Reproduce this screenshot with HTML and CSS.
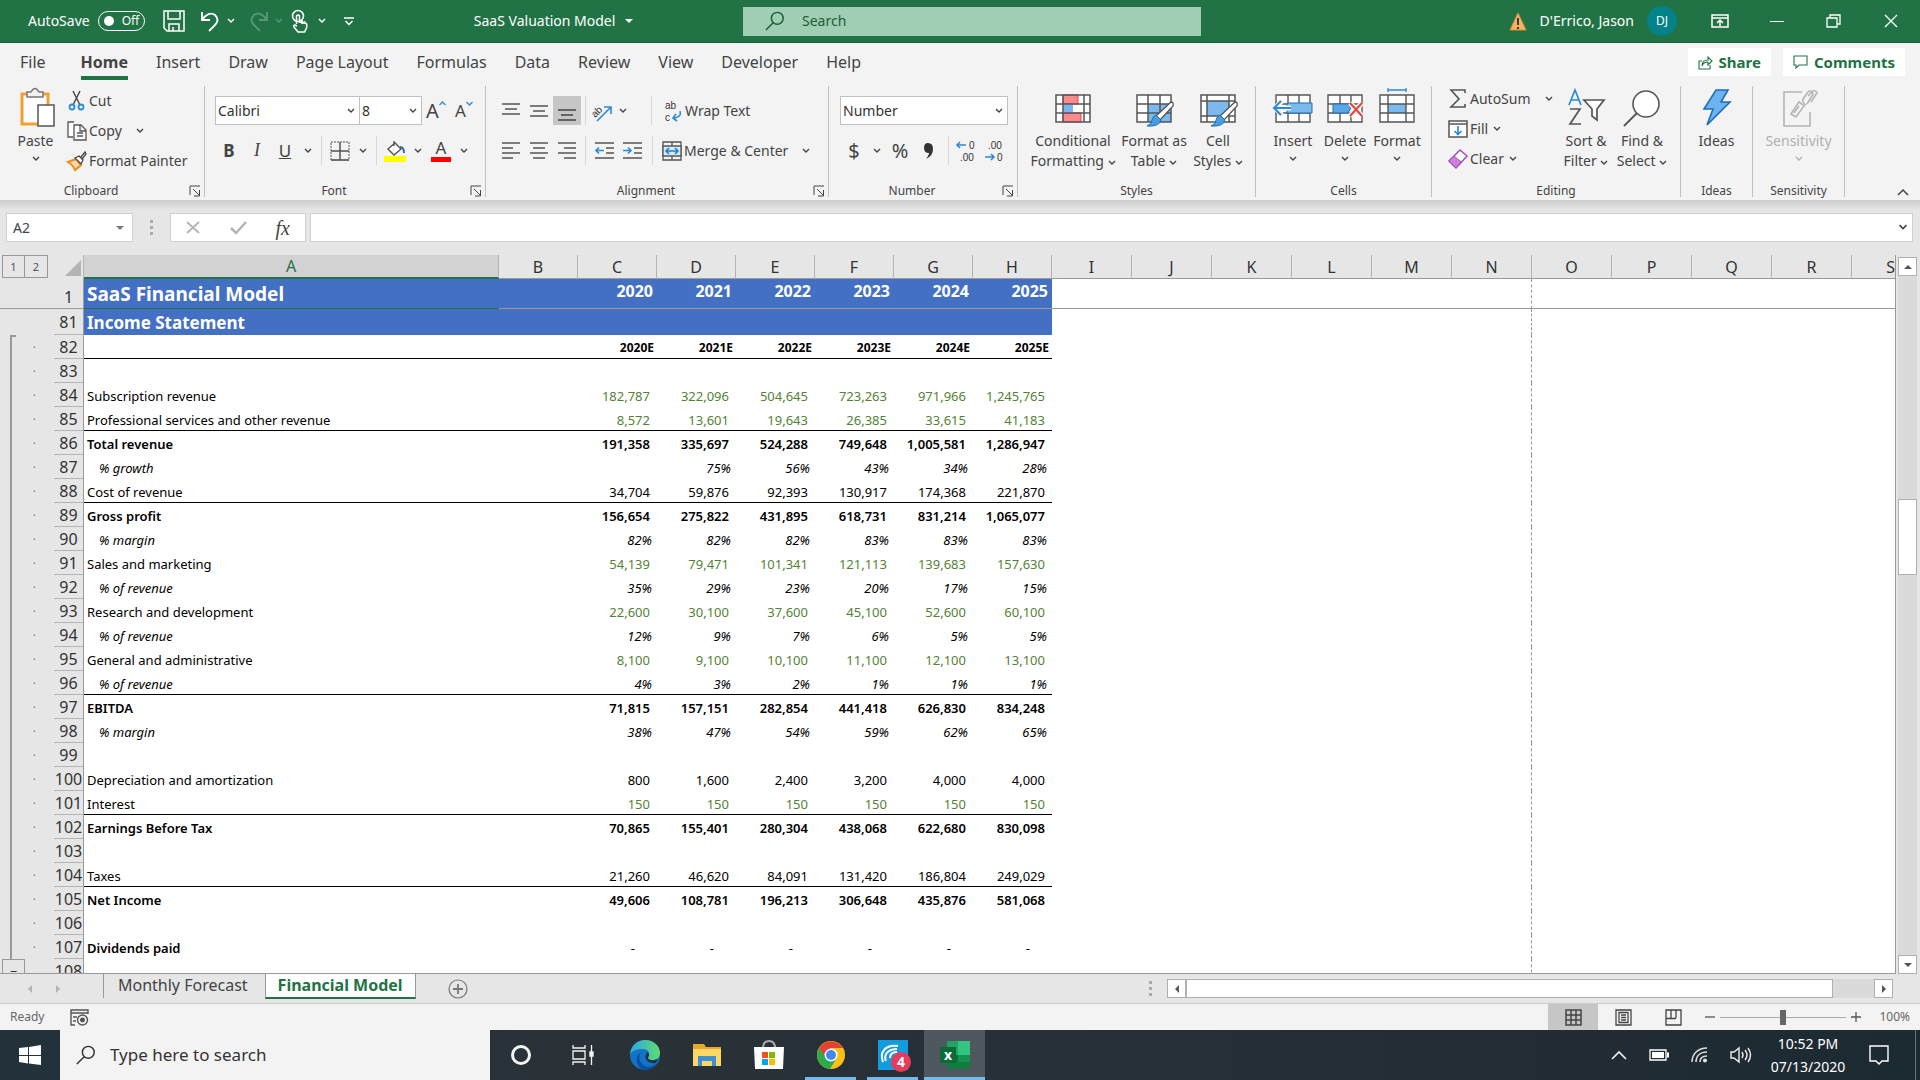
FILE: index.html
```html
<!DOCTYPE html>
<html lang="en">
<head>
<meta charset="utf-8">
<title>SaaS Valuation Model - Excel</title>
<link rel="stylesheet" href="styles.css">
</head>
<body>
<svg class="defs" aria-hidden="true">
  <symbol id="chev" viewBox="0 0 8 6"><path d="M1 1l3 3 3-3" fill="none" stroke="currentColor" stroke-width="1.4"/></symbol>
  <symbol id="launch" viewBox="0 0 12 12"><path d="M1 10V1h10M4 4l6 6M10.500 5v6H5" fill="none" stroke="currentColor"/></symbol>
  <symbol id="glass" viewBox="0 0 22 22"><circle cx="13.500" cy="8" r="6.500" fill="none" stroke="currentColor" stroke-width="1.600"/><path d="M9 13l-8 8" stroke="currentColor" stroke-width="1.600"/></symbol>
</svg>

<header class="titlebar">
  <div class="quick">
    <label class="autosave">AutoSave <input type="checkbox" class="toggle"><span class="toggle-face">Off</span></label>
    <button class="q save" aria-label="Save"><svg width="22" height="22" viewBox="0 0 22 22" fill="none" stroke="currentColor" stroke-width="1.500"><path d="M1 1h20v20H4l-3-3zM5 1v8h12V1M6 21v-7h10v7M10 17v4"/></svg></button>
    <button class="q undo" aria-label="Undo"><svg width="20" height="22" viewBox="0 0 20 22" fill="none" stroke="currentColor" stroke-width="1.800"><path d="M2 2v8h8M2 10c4-6 9-8 13-5 4 4 3 7 0 10l-6 6"/></svg></button>
    <button class="q" aria-label="Undo list"><svg class="chev"><use href="#chev"/></svg></button>
    <button class="q redo dim" aria-label="Redo"><svg width="20" height="22" viewBox="0 0 20 22" fill="none" stroke="currentColor" stroke-width="1.800"><path d="M18 2v8h-8M18 10C14 4 9 2 5 5c-4 4-3 7 0 10l6 6"/></svg></button>
    <button class="q dim" aria-label="Redo list"><svg class="chev"><use href="#chev"/></svg></button>
    <button class="q touch" aria-label="Touch mode"><svg width="18" height="24" viewBox="0 0 18 24" fill="none" stroke="currentColor" stroke-width="1.500"><circle cx="7" cy="7" r="5.500"/><path d="M5.500 15V7q1.500-2 3 0v6l6 1q2 1 1 5l-2 4H7l-4-5q-1-2 1-2l2 1M11 11v4M13.500 12v3" /></svg></button>
    <button class="q" aria-label="Touch list"><svg class="chev"><use href="#chev"/></svg></button>
    <button class="q custom" aria-label="Customize toolbar"><svg width="10" height="9" viewBox="0 0 10 9" fill="none" stroke="currentColor" stroke-width="1.500"><path d="M0 1h10M1.500 4L5 7.500 8.500 4"/></svg></button>
    <button class="docname">SaaS Valuation Model <span class="tri down"></span></button>
  </div>
  <label class="search"><svg width="20" height="20"><use href="#glass"/></svg><input type="text" placeholder="Search" aria-label="Search"></label>
  <div class="account">
    <svg width="18" height="19" viewBox="0 0 18 19"><path d="M9 1l8 17H1z" fill="#f4b264" stroke="#e08a2c"/><path d="M9 6v7M9 15v2" stroke="#3b3b3b" stroke-width="2"/></svg>
    <span class="user">D'Errico, Jason</span>
    <span class="avatar">DJ</span>
    <button class="win" aria-label="Ribbon display"><svg width="18" height="14" viewBox="0 0 18 14" fill="none" stroke="currentColor" stroke-width="1.500"><path d="M1 1h16v12H1zM1 4h16M9 12V6M6 9l3-3 3 3"/></svg></button>
    <button class="win" aria-label="Minimize"><svg width="14" height="14" viewBox="0 0 14 14"><path d="M0 7.500h14" stroke="currentColor"/></svg></button>
    <button class="win" aria-label="Restore"><svg width="15" height="14" viewBox="0 0 15 14" fill="none" stroke="currentColor" stroke-width="1.300"><path d="M1 4h10v9H1zM4 4V1h10v9h-3"/></svg></button>
    <button class="win" aria-label="Close"><svg width="14" height="14" viewBox="0 0 14 14"><path d="M1 1l12 12M13 1L1 13" stroke="currentColor" stroke-width="1.400"/></svg></button>
  </div>
</header>

<nav class="tabs">
  <a href="#" class="file">File</a><a href="#" class="on">Home</a><a href="#">Insert</a><a href="#">Draw</a><a href="#">Page Layout</a><a href="#">Formulas</a><a href="#">Data</a><a href="#">Review</a><a href="#">View</a><a href="#">Developer</a><a href="#">Help</a>
  <div class="collab">
    <button><svg width="15" height="15" viewBox="0 0 15 15" fill="none" stroke="currentColor" stroke-width="1.100"><path d="M4 6H1v8h11v-4M4 11c0-4 2-6 6-6V2l4 4-4 4V7C7 7 5 8 4 11z"/></svg>Share</button>
    <button><svg width="15" height="14" viewBox="0 0 15 14" fill="none" stroke="currentColor" stroke-width="1.100"><path d="M1 1h13v9H6l-3 3v-3H1z"/></svg>Comments</button>
  </div>
</nav>

<section class="ribbon">
  <div class="group clipboard">
    <div class="body">
      <button class="big paste"><svg width="36" height="40" viewBox="0 0 36 40"><path d="M2 6h26v30H2z" fill="#fff" stroke="#f0a030" stroke-width="3"/><path d="M7 4h4q4-7 8 0h4v5H7z" fill="#f3f3f3" stroke="#777" stroke-width="1.500"/><path d="M18 17h16v21H18z" fill="#fff" stroke="#555" stroke-width="1.500"/></svg><span>Paste</span><svg class="chev"><use href="#chev"/></svg></button>
      <div class="stack">
        <button class="small"><svg width="18" height="20" viewBox="0 0 18 20" fill="none" stroke="#444" stroke-width="1.400"><path d="M5 0l7 14M12 0L5 14"/><g stroke="#2b8bd6" stroke-width="1.800"><circle cx="4" cy="16" r="2.500"/><circle cx="13" cy="16" r="2.500"/></g></svg>Cut</button>
        <button class="small"><svg width="20" height="20" viewBox="0 0 20 20" fill="#fff" stroke="#555" stroke-width="1.300"><path d="M7 1H1v15h5"/><path d="M7 4h7l5 5v10H7zM13 4v6h6M10 12h6M10 15h6"/></svg>Copy<svg class="chev gap"><use href="#chev"/></svg></button>
        <button class="small"><svg width="20" height="20" viewBox="0 0 20 20"><path d="M1 11l8-3 5 6-6 5q-2-5-7-8z" fill="#fbd8ae" stroke="#ed8b1c" stroke-width="2"/><path d="M8 7l4-2 4 4-2 4zM14 6l4-5 1 2-4 5" fill="#fff" stroke="#444" stroke-width="1.300"/></svg>Format Painter</button>
      </div>
    </div>
    <div class="name">Clipboard<button class="launch" aria-label="Clipboard options"><svg width="12" height="12"><use href="#launch"/></svg></button></div>
  </div>

  <div class="group font">
    <div class="body rows">
      <div class="row">
        <label class="combo family"><select aria-label="Font"><option>Calibri</option></select><svg class="chev"><use href="#chev"/></svg></label>
        <label class="combo size"><select aria-label="Font size"><option>8</option></select><svg class="chev"><use href="#chev"/></svg></label>
        <button class="ic grow" aria-label="Increase font size"><span class="glyph">A</span><svg width="7" height="5" viewBox="0 0 7 5"><path d="M0.500 4l3-3 3 3" fill="none" stroke="#2b8bd6" stroke-width="1.300"/></svg></button>
        <button class="ic shrink" aria-label="Decrease font size"><span class="glyph">A</span><svg width="7" height="5" viewBox="0 0 7 5"><path d="M0.500 1l3 3 3-3" fill="none" stroke="#2b8bd6" stroke-width="1.300"/></svg></button>
      </div>
      <div class="row">
        <button class="ic w28 fmt"><b>B</b></button><button class="ic w28 fmt ital">I</button><button class="ic w28 fmt"><u>U</u></button><button class="ic w18" aria-label="Underline list"><svg class="chev"><use href="#chev"/></svg></button>
        <span class="sep"></span>
        <button class="ic w28" aria-label="Borders"><svg width="20" height="20" viewBox="0 0 20 20" fill="none" stroke="#555"><path d="M1 1h18v18H1z" stroke-dasharray="2 1"/><path d="M10 1v18M1 10h18M1 19h18" stroke-width="1.500"/></svg></button><button class="ic w18" aria-label="Borders list"><svg class="chev"><use href="#chev"/></svg></button>
        <span class="sep"></span>
        <button class="ic w28" aria-label="Fill color"><svg width="22" height="22" viewBox="0 0 22 22"><path d="M0 16h22v6H0z" fill="#ff0"/><path d="M10 1v5M4 9l7-6 6 6-7 6z" fill="#fff" stroke="#555" stroke-width="1.400"/><path d="M16 7q4 0 4 6" fill="none" stroke="#2b6ea8" stroke-width="2"/></svg></button><button class="ic w18" aria-label="Fill list"><svg class="chev"><use href="#chev"/></svg></button>
        <button class="ic w28" aria-label="Font color"><span class="fontcolor">A</span></button><button class="ic w18" aria-label="Font color list"><svg class="chev"><use href="#chev"/></svg></button>
      </div>
    </div>
    <div class="name">Font<button class="launch" aria-label="Font options"><svg width="12" height="12"><use href="#launch"/></svg></button></div>
  </div>

  <div class="group align">
    <div class="body rows">
      <div class="row">
        <button class="ic w28" aria-label="Top"><svg width="18" height="20" viewBox="0 0 18 20" stroke="#555" stroke-width="1.400"><path d="M0 3h18M3 8h12M0 13h18"/></svg></button><button class="ic w28" aria-label="Middle"><svg width="18" height="20" viewBox="0 0 18 20" stroke="#555" stroke-width="1.400"><path d="M0 5h18M3 10h12M0 15h18"/></svg></button><button class="ic w28 pressed" aria-label="Bottom"><svg width="18" height="20" viewBox="0 0 18 20" stroke="#444" stroke-width="1.400"><path d="M0 9h18M3 14h12M0 19h18"/></svg></button>
        <span class="sep"></span>
        <button class="ic w24" aria-label="Orientation"><svg width="24" height="22" viewBox="0 0 24 22"><text x="1" y="14" transform="rotate(-45 8 11)" class="tinytext">ab</text><path d="M7 21L20 8M14 7h7v7" fill="none" stroke="#2b8bd6" stroke-width="1.600"/></svg></button><button class="ic w18" aria-label="Orientation list"><svg class="chev"><use href="#chev"/></svg></button>
        <span class="sep wide"></span>
        <button class="small wrap"><svg width="20" height="24" viewBox="0 0 20 24"><text x="2" y="10" class="tinytext">ab</text><text x="2" y="22" class="tinytext">c</text><path d="M17 12q2 6-6 7M13 15l-3 4 4 3" fill="none" stroke="#2b8bd6" stroke-width="1.600"/></svg>Wrap Text</button>
      </div>
      <div class="row">
        <button class="ic w28" aria-label="Left"><svg width="18" height="18" viewBox="0 0 18 18" stroke="#555" stroke-width="1.400"><path d="M0 1h18M0 6h11M0 11h18M0 16h11"/></svg></button><button class="ic w28" aria-label="Center"><svg width="18" height="18" viewBox="0 0 18 18" stroke="#555" stroke-width="1.400"><path d="M0 1h18M3 6h12M0 11h18M3 16h12"/></svg></button><button class="ic w28" aria-label="Right"><svg width="18" height="18" viewBox="0 0 18 18" stroke="#555" stroke-width="1.400"><path d="M0 1h18M6 6h12M0 11h18M6 16h12"/></svg></button>
        <span class="sep"></span>
        <button class="ic w28" aria-label="Decrease indent"><svg width="19" height="18" viewBox="0 0 19 18" fill="none" stroke="#555" stroke-width="1.400"><path d="M0 1h19M11 6h8M11 11h8M0 16h19"/><path d="M9 8.500H1M4 5.500l-3 3 3 3" stroke="#2b8bd6" stroke-width="1.700"/></svg></button><button class="ic w28" aria-label="Increase indent"><svg width="19" height="18" viewBox="0 0 19 18" fill="none" stroke="#555" stroke-width="1.400"><path d="M0 1h19M11 6h8M11 11h8M0 16h19"/><path d="M0 8.500h8M5 5.500l3 3-3 3" stroke="#2b8bd6" stroke-width="1.700"/></svg></button>
        <span class="sep near"></span>
        <button class="small merge"><svg width="20" height="20" viewBox="0 0 20 20" fill="none" stroke="#555" stroke-width="1.300"><path d="M1 1h18v18H1zM10 1v4M10 15v4"/><path d="M1 5h18v10H1z" fill="#d6ebfa"/><path d="M4 10h12M7 7l-3 3 3 3M13 7l3 3-3 3" stroke="#1f7fd0" stroke-width="1.600"/></svg>Merge &amp; Center<svg class="chev gap"><use href="#chev"/></svg></button>
      </div>
    </div>
    <div class="name">Alignment<button class="launch" aria-label="Alignment options"><svg width="12" height="12"><use href="#launch"/></svg></button></div>
  </div>

  <div class="group number">
    <div class="body rows">
      <div class="row"><label class="combo numfmt"><select aria-label="Number format"><option>Number</option></select><svg class="chev"><use href="#chev"/></svg></label></div>
      <div class="row">
        <button class="ic w28 sym">$</button><button class="ic w18" aria-label="Currency list"><svg class="chev"><use href="#chev"/></svg></button><button class="ic w28 sym">%</button><button class="ic w28" aria-label="Comma style"><svg width="11" height="18" viewBox="0 0 11 18"><path d="M5 1q5 0 5 6 0 7-7 10 3-4 3-6-5 0-5-5 0-5 4-5z" fill="#333"/></svg></button>
        <span class="sep near"></span>
        <button class="ic w28" aria-label="Increase decimal"><svg width="22" height="24" viewBox="0 0 22 24"><text x="13" y="10" class="tinytext">0</text><text x="4" y="22" class="tinytext">.00</text><path d="M10 6H1M4 3L1 6l3 3" fill="none" stroke="#2b8bd6" stroke-width="1.600"/></svg></button><button class="ic w28" aria-label="Decrease decimal"><svg width="22" height="24" viewBox="0 0 22 24"><text x="4" y="10" class="tinytext">.00</text><text x="13" y="22" class="tinytext">0</text><path d="M1 18h9M7 15l3 3-3 3" fill="none" stroke="#2b8bd6" stroke-width="1.600"/></svg></button>
      </div>
    </div>
    <div class="name">Number<button class="launch" aria-label="Number options"><svg width="12" height="12"><use href="#launch"/></svg></button></div>
  </div>

  <div class="group styles">
    <div class="body">
      <button class="big b96"><svg width="36" height="40" viewBox="0 0 36 40"><path d="M1 7h34v27H1z" fill="#fff"/><path d="M8 7h15v9H8zM8 25h18v9H8z" fill="#ff8a8e" stroke="#e8434a"/><path d="M8 16h10v9H8z" fill="#7cb6ec"/><path d="M1 7h34v27H1zM1 16h34M1 25h34M8 7v27M29 7v27" fill="none" stroke="#555" stroke-width="1.500"/></svg><span>Conditional</span><span>Formatting <svg class="chev"><use href="#chev"/></svg></span></button>
      <button class="big b66"><svg width="40" height="40" viewBox="-2 0 40 40"><path d="M1 7h34v27H1z" fill="#fff"/><path d="M12 16h23v18H12z" fill="#7cb9ee"/><path d="M1 7h34v27H1zM1 16h34M1 25h34M12 7v27M24 7v27" fill="none" stroke="#555" stroke-width="1.500"/><path d="M35 14q3 0 2 4L24 32l-4-4z" fill="#fff" stroke="#555" stroke-width="1.300"/><path d="M20 27l5 5q-2 7-14 6 5-2 5-6 1-4 4-5z" fill="#4a9ee0" stroke="#1d6fb5"/></svg><span>Format as</span><span>Table <svg class="chev"><use href="#chev"/></svg></span></button>
      <button class="big b62"><svg width="40" height="40" viewBox="-2 0 40 40"><path d="M1 7h34v27H1z" fill="#fff"/><path d="M7 13h22v15H7z" fill="#7cb9ee"/><path d="M1 7h34v27H1zM1 13h34M1 28h34M7 7v27M29 7v27" fill="none" stroke="#555" stroke-width="1.500"/><path d="M35 14q3 0 2 4L24 32l-4-4z" fill="#fff" stroke="#555" stroke-width="1.300"/><path d="M20 27l5 5q-2 7-14 6 5-2 5-6 1-4 4-5z" fill="#4a9ee0" stroke="#1d6fb5"/></svg><span>Cell</span><span>Styles <svg class="chev"><use href="#chev"/></svg></span></button>
    </div>
    <div class="name">Styles</div>
  </div>

  <div class="group cells">
    <div class="body">
      <button class="big b52"><svg width="40" height="40" viewBox="0 0 40 40"><path d="M3 7h34v27H3zM3 16h34M3 25h34M15 7v27M26 7v27" fill="#fff" stroke="#555" stroke-width="1.400"/><path d="M14 15h25v10H14z" fill="#7cb9ee" stroke="#1d6fb5"/><path d="M18 20H2M9 13l-7 7 7 7" fill="none" stroke="#f3f3f3" stroke-width="5"/><path d="M18 20H2M8 13l-7 7 7 7" fill="none" stroke="#2b8bd6" stroke-width="2"/></svg><span>Insert</span><svg class="chev"><use href="#chev"/></svg></button>
      <button class="big b52"><svg width="40" height="40" viewBox="0 0 40 40"><path d="M3 7h34v27H3zM3 16h34M3 25h34M15 7v9M26 7v9M15 25v9M26 25v9" fill="#fff" stroke="#555" stroke-width="1.400"/><path d="M8 16h15l3 4-3 5H8z" fill="#5aa7e6" stroke="#1d6fb5"/><path d="M25 15l12 13M37 15L25 28" stroke="#f3f3f3" stroke-width="5"/><path d="M25 15l12 13M37 15L25 28" stroke="#e0483e" stroke-width="2"/></svg><span>Delete</span><svg class="chev"><use href="#chev"/></svg></button>
      <button class="big b52"><svg width="40" height="40" viewBox="0 0 40 40"><path d="M3 7h34v27H3z" fill="#fff"/><path d="M11 16h18v9H11z" fill="#7cb9ee"/><path d="M3 7h34v27H3zM3 16h34M3 25h34M11 7v27M29 7v27" fill="none" stroke="#555" stroke-width="1.400"/><path d="M11 2h18M11 0v4M29 0v4" stroke="#2b8bd6" stroke-width="1.300"/></svg><span>Format</span><svg class="chev"><use href="#chev"/></svg></button>
    </div>
    <div class="name">Cells</div>
  </div>

  <div class="group editing">
    <div class="body">
      <div class="stack">
        <button class="small"><svg width="18" height="20" viewBox="0 0 18 20"><path d="M16 4V1H2l8 9-8 8h14v-3" fill="none" stroke="#555" stroke-width="1.600"/></svg>AutoSum<svg class="chev gap"><use href="#chev"/></svg></button>
        <button class="small"><svg width="20" height="18" viewBox="0 0 20 18" fill="#fff" stroke="#555" stroke-width="1.500"><path d="M1 1h18v16H1zM1 4h18"/><path d="M10 6v8M6.500 11l3.500 3.500 3.500-3.500" fill="none" stroke="#2b8bd6" stroke-width="1.700"/></svg>Fill<svg class="chev near"><use href="#chev"/></svg></button>
        <button class="small"><svg width="20" height="20" viewBox="0 0 20 20"><path d="M12 1l7 6L8 19l-7-7z" fill="#fff" stroke="#a04cb0" stroke-width="1.500"/><path d="M6 7l7 6-5 6-7-7z" fill="#cf7fdc" stroke="#a04cb0"/></svg>Clear<svg class="chev near"><use href="#chev"/></svg></button>
      </div>
      <button class="big b56"><svg width="38" height="40" viewBox="0 0 38 40"><g fill="none" stroke-width="1.700"><path d="M2 17L8 2l6 15M4 12h8" stroke="#2b8bd6"/><path d="M3 21h10L3 36h11" stroke="#555"/><path d="M17 12h20l-7 9v11l-5-4v-7z" stroke="#555" fill="#fff"/></g></svg><span>Sort &amp;</span><span>Filter <svg class="chev"><use href="#chev"/></svg></span></button>
      <button class="big b56"><svg width="38" height="40" viewBox="0 0 38 40"><circle cx="23" cy="16" r="13" fill="#fff" stroke="#555" stroke-width="1.600"/><path d="M14 25L1 38" stroke="#555" stroke-width="1.800"/></svg><span>Find &amp;</span><span>Select <svg class="chev"><use href="#chev"/></svg></span></button>
    </div>
    <div class="name">Editing</div>
  </div>

  <div class="group ideas">
    <div class="body"><button class="big"><svg width="30" height="40" viewBox="0 0 30 40"><path d="M14 2h12l-7 12h9L5 37l6-16H2z" fill="#6db3f0" stroke="#1f6fb8" stroke-width="1.600"/></svg><span>Ideas</span></button></div>
    <div class="name">Ideas</div>
  </div>

  <div class="group sens">
    <div class="body"><button class="big off" disabled><svg width="36" height="40" viewBox="-2 0 36 40" fill="none" stroke="#b4b4b4" stroke-width="1.600"><path d="M19 4H1v34h26V24"/><path d="M8 26l8-12 5 4-8 11zM11 25l5-7"/><path d="M20 11l5-7q2-2 4 0t0 4l-5 8M25 8l5-5q3-1 4 2l-6 9M20 11q-1 4 3 6" /></svg><span>Sensitivity</span><svg class="chev"><use href="#chev"/></svg></button></div>
    <div class="name">Sensitivity</div>
  </div>
  <button class="collapse" aria-label="Collapse ribbon"><svg width="12" height="8" viewBox="0 0 12 8"><path d="M1 7l5-5 5 5" fill="none" stroke="#444" stroke-width="1.500"/></svg></button>
</section>

<section class="formula">
  <label class="namebox"><input type="text" value="A2" aria-label="Name box"><span class="tri down"></span></label>
  <span class="grip"></span>
  <div class="fx">
    <button aria-label="Cancel"><svg width="14" height="13" viewBox="0 0 14 13"><path d="M1 1l12 11M13 1L1 12" stroke="#b4b4b4" stroke-width="1.800"/></svg></button>
    <button aria-label="Enter"><svg width="17" height="13" viewBox="0 0 17 13"><path d="M1 7l5 5L16 1" fill="none" stroke="#b4b4b4" stroke-width="2.500"/></svg></button>
    <button class="f"><i>fx</i></button>
  </div>
  <label class="entry"><input type="text" aria-label="Formula"><svg width="10" height="7"><use href="#chev"/></svg></label>
</section>

<main class="sheet">
  <div class="grid">
    <table>
      <colgroup><col class="c-out"><col class="c-num"><col class="c-a"><col class="c-b"><col class="c-d" span="6"><col class="c-x" span="10"><col></colgroup>
      <thead>
        <tr><td class="levels"><button>1</button><button>2</button></td><td class="corner"><span></span></td><th class="sel">A</th><th>B</th><th>C</th><th>D</th><th>E</th><th>F</th><th>G</th><th>H</th><th>I</th><th>J</th><th>K</th><th>L</th><th>M</th><th>N</th><th>O</th><th>P</th><th>Q</th><th>R</th><th class="last">S</th></tr>
      </thead>
      <tbody>
        <tr class="frozen"><td class="out"></td><th>1</th><td class="title here">SaaS Financial Model</td><td></td><td>2020</td><td>2021</td><td>2022</td><td>2023</td><td>2024</td><td>2025</td><td class="page" colspan="6"></td><td class="blank" colspan="5"></td></tr>
        <tr class="section"><td class="out"></td><th>81</th><td colspan="8">Income Statement</td><td class="page" colspan="6"></td><td class="blank" colspan="5"></td></tr>
        <tr class="years rule"><td class="out first">·</td><th>82</th><td></td><td></td><td>2020E</td><td>2021E</td><td>2022E</td><td>2023E</td><td>2024E</td><td>2025E</td><td class="page" colspan="6"></td><td class="blank" colspan="5"></td></tr>
        <tr><td class="out">·</td><th>83</th><td colspan="8"></td><td class="page" colspan="6"></td><td class="blank" colspan="5"></td></tr>
        <tr class="input"><td class="out">·</td><th>84</th><td>Subscription revenue</td><td></td><td>182,787</td><td>322,096</td><td>504,645</td><td>723,263</td><td>971,966</td><td>1,245,765</td><td class="page" colspan="6"></td><td class="blank" colspan="5"></td></tr>
        <tr class="input rule"><td class="out">·</td><th>85</th><td>Professional services and other revenue</td><td></td><td>8,572</td><td>13,601</td><td>19,643</td><td>26,385</td><td>33,615</td><td>41,183</td><td class="page" colspan="6"></td><td class="blank" colspan="5"></td></tr>
        <tr class="total"><td class="out">·</td><th>86</th><td>Total revenue</td><td></td><td>191,358</td><td>335,697</td><td>524,288</td><td>749,648</td><td>1,005,581</td><td>1,286,947</td><td class="page" colspan="6"></td><td class="blank" colspan="5"></td></tr>
        <tr class="pct"><td class="out">·</td><th>87</th><td>% growth</td><td></td><td></td><td>75%</td><td>56%</td><td>43%</td><td>34%</td><td>28%</td><td class="page" colspan="6"></td><td class="blank" colspan="5"></td></tr>
        <tr class="rule"><td class="out">·</td><th>88</th><td>Cost of revenue</td><td></td><td>34,704</td><td>59,876</td><td>92,393</td><td>130,917</td><td>174,368</td><td>221,870</td><td class="page" colspan="6"></td><td class="blank" colspan="5"></td></tr>
        <tr class="total"><td class="out">·</td><th>89</th><td>Gross profit</td><td></td><td>156,654</td><td>275,822</td><td>431,895</td><td>618,731</td><td>831,214</td><td>1,065,077</td><td class="page" colspan="6"></td><td class="blank" colspan="5"></td></tr>
        <tr class="pct"><td class="out">·</td><th>90</th><td>% margin</td><td></td><td>82%</td><td>82%</td><td>82%</td><td>83%</td><td>83%</td><td>83%</td><td class="page" colspan="6"></td><td class="blank" colspan="5"></td></tr>
        <tr class="input"><td class="out">·</td><th>91</th><td>Sales and marketing</td><td></td><td>54,139</td><td>79,471</td><td>101,341</td><td>121,113</td><td>139,683</td><td>157,630</td><td class="page" colspan="6"></td><td class="blank" colspan="5"></td></tr>
        <tr class="pct"><td class="out">·</td><th>92</th><td>% of revenue</td><td></td><td>35%</td><td>29%</td><td>23%</td><td>20%</td><td>17%</td><td>15%</td><td class="page" colspan="6"></td><td class="blank" colspan="5"></td></tr>
        <tr class="input"><td class="out">·</td><th>93</th><td>Research and development</td><td></td><td>22,600</td><td>30,100</td><td>37,600</td><td>45,100</td><td>52,600</td><td>60,100</td><td class="page" colspan="6"></td><td class="blank" colspan="5"></td></tr>
        <tr class="pct"><td class="out">·</td><th>94</th><td>% of revenue</td><td></td><td>12%</td><td>9%</td><td>7%</td><td>6%</td><td>5%</td><td>5%</td><td class="page" colspan="6"></td><td class="blank" colspan="5"></td></tr>
        <tr class="input"><td class="out">·</td><th>95</th><td>General and administrative</td><td></td><td>8,100</td><td>9,100</td><td>10,100</td><td>11,100</td><td>12,100</td><td>13,100</td><td class="page" colspan="6"></td><td class="blank" colspan="5"></td></tr>
        <tr class="pct rule"><td class="out">·</td><th>96</th><td>% of revenue</td><td></td><td>4%</td><td>3%</td><td>2%</td><td>1%</td><td>1%</td><td>1%</td><td class="page" colspan="6"></td><td class="blank" colspan="5"></td></tr>
        <tr class="total"><td class="out">·</td><th>97</th><td>EBITDA</td><td></td><td>71,815</td><td>157,151</td><td>282,854</td><td>441,418</td><td>626,830</td><td>834,248</td><td class="page" colspan="6"></td><td class="blank" colspan="5"></td></tr>
        <tr class="pct"><td class="out">·</td><th>98</th><td>% margin</td><td></td><td>38%</td><td>47%</td><td>54%</td><td>59%</td><td>62%</td><td>65%</td><td class="page" colspan="6"></td><td class="blank" colspan="5"></td></tr>
        <tr><td class="out">·</td><th>99</th><td colspan="8"></td><td class="page" colspan="6"></td><td class="blank" colspan="5"></td></tr>
        <tr><td class="out">·</td><th>100</th><td>Depreciation and amortization</td><td></td><td>800</td><td>1,600</td><td>2,400</td><td>3,200</td><td>4,000</td><td>4,000</td><td class="page" colspan="6"></td><td class="blank" colspan="5"></td></tr>
        <tr class="input rule"><td class="out">·</td><th>101</th><td>Interest</td><td></td><td>150</td><td>150</td><td>150</td><td>150</td><td>150</td><td>150</td><td class="page" colspan="6"></td><td class="blank" colspan="5"></td></tr>
        <tr class="total"><td class="out">·</td><th>102</th><td>Earnings Before Tax</td><td></td><td>70,865</td><td>155,401</td><td>280,304</td><td>438,068</td><td>622,680</td><td>830,098</td><td class="page" colspan="6"></td><td class="blank" colspan="5"></td></tr>
        <tr><td class="out">·</td><th>103</th><td colspan="8"></td><td class="page" colspan="6"></td><td class="blank" colspan="5"></td></tr>
        <tr class="rule"><td class="out">·</td><th>104</th><td>Taxes</td><td></td><td>21,260</td><td>46,620</td><td>84,091</td><td>131,420</td><td>186,804</td><td>249,029</td><td class="page" colspan="6"></td><td class="blank" colspan="5"></td></tr>
        <tr class="total"><td class="out">·</td><th>105</th><td>Net Income</td><td></td><td>49,606</td><td>108,781</td><td>196,213</td><td>306,648</td><td>435,876</td><td>581,068</td><td class="page" colspan="6"></td><td class="blank" colspan="5"></td></tr>
        <tr><td class="out">·</td><th>106</th><td colspan="8"></td><td class="page" colspan="6"></td><td class="blank" colspan="5"></td></tr>
        <tr class="total dash"><td class="out">·</td><th>107</th><td>Dividends paid</td><td></td><td>-</td><td>-</td><td>-</td><td>-</td><td>-</td><td>-</td><td class="page" colspan="6"></td><td class="blank" colspan="5"></td></tr>
        <tr><td class="out end"><button aria-label="Collapse group">−</button></td><th>108</th><td colspan="8"></td><td class="page" colspan="6"></td><td class="blank" colspan="5"></td></tr>
      </tbody>
    </table>
  </div>
  <div class="vscroll"><button aria-label="Scroll up"><span class="tri up"></span></button><div class="track"><div class="thumb"></div></div><button aria-label="Scroll down"><span class="tri down"></span></button></div>
</main>

<section class="sheettabs">
  <div class="nav"><span class="tri left"></span><span class="tri right"></span></div>
  <a href="#" class="tab">Monthly Forecast</a><a href="#" class="tab active">Financial Model</a>
  <button class="add" aria-label="New sheet"><svg width="20" height="20" viewBox="0 0 20 20" fill="none" stroke="#777" stroke-width="1.200"><circle cx="10" cy="10" r="9"/><path d="M10 5v10M5 10h10" stroke-width="1.800"/></svg></button>
  <span class="grip"></span>
  <div class="hscroll"><button aria-label="Scroll left"><span class="tri left"></span></button><div class="track"><div class="thumb"></div></div><button aria-label="Scroll right"><span class="tri right"></span></button></div>
</section>

<section class="status">
  <span>Ready</span>
  <button aria-label="Record macro"><svg width="19" height="17" viewBox="0 0 19 17" fill="none" stroke="#555" stroke-width="1.400"><path d="M5 16H1V1h17v4M1 4h17M3 8h4M3 12h3"/><circle cx="12.500" cy="11" r="5"/><circle cx="12.500" cy="11" r="1.800" fill="#555"/></svg></button>
  <div class="views">
    <button class="pressed" aria-label="Normal"><svg width="17" height="17" viewBox="0 0 17 17" fill="none" stroke="#444" stroke-width="1.500"><path d="M1 1h15v15H1zM6 1v15M11 1v15M1 6h15M1 11h15"/></svg></button>
    <button aria-label="Page layout"><svg width="17" height="17" viewBox="0 0 17 17" fill="none" stroke="#444" stroke-width="1.300"><path d="M1 1h15v15H1zM4 3.500h9v10H4zM6 6h5M6 8.500h5M6 11h5"/></svg></button>
    <button aria-label="Page break"><svg width="17" height="17" viewBox="0 0 17 17" fill="none" stroke="#444" stroke-width="1.300"><path d="M1 1h15v15H1zM6 1v8M11 1v8M1 9.500h10"/></svg></button>
  </div>
  <button class="zoomout" aria-label="Zoom out"><svg width="10" height="10" viewBox="0 0 10 10"><path d="M0 5h10" stroke="#555" stroke-width="1.300"/></svg></button>
  <input class="slider" type="range" min="0" max="100" value="50" aria-label="Zoom">
  <button class="zoomin" aria-label="Zoom in"><svg width="10" height="10" viewBox="0 0 10 10"><path d="M0 5h10M5 0v10" stroke="#555" stroke-width="1.300"/></svg></button>
  <span class="zoompct">100%</span>
</section>

<footer class="taskbar">
  <button class="start" aria-label="Start"><svg width="22" height="20" viewBox="0 0 22 20" fill="#fff"><path d="M0 3l9-1v8H0zM10 2l12-2v10H10zM0 11h9v7.500L0 17zM10 11h12v9l-12-1.500z"/></svg></button>
  <label class="find"><svg width="22" height="20"><use href="#glass"/></svg><input type="text" placeholder="Type here to search" aria-label="Type here to search"></label>
  <button class="app" aria-label="Cortana"><svg width="22" height="22" viewBox="0 0 22 22"><circle cx="11" cy="11" r="8.500" fill="none" stroke="#f4f4f4" stroke-width="3"/></svg></button>
  <button class="app" aria-label="Task view"><svg width="22" height="20" viewBox="0 0 22 20" fill="none" stroke="#f4f4f4" stroke-width="1.300"><path d="M1 0v3h12V0M1 6h12v8H1zM1 20v-3h12v3M19.500 0v20"/><path d="M18 7h3v4h-3z" fill="#f4f4f4"/></svg></button>
  <button class="app edge" aria-label="Edge"><svg width="30" height="30" viewBox="0 0 30 30"><defs><linearGradient id="eg" x1="0" y1="0" x2="1" y2="0"><stop offset="0" stop-color="#2aa6e8"/><stop offset="1" stop-color="#5fdc6c"/></linearGradient></defs><circle cx="15" cy="15" r="15" fill="#1273c8"/><path d="M0 14C1 5 8 0 15 0c9 0 15 6 15 13 0 5-4 7-8 7-3 0-5-1-4-3 3-4 0-8-5-8-6 0-11 2-13 5z" fill="url(#eg)"/><path d="M13 11c-5 2-5 10 0 14 4 3 10 2 14-2-3 5-8 7-12 7-8-1-13-14-2-19z" fill="#0c4f9c"/><path d="M17 12c3 2 2 4 1 6 1 3 6 3 10 1l-2 4c-8 1-13-4-9-11z" fill="#24303a"/></svg></button>
  <button class="app folder" aria-label="File Explorer"><svg width="28" height="24" viewBox="0 0 28 24"><path d="M0 1h11l2 3h15v19H0z" fill="#e8a92a"/><path d="M0 6h28v17H0z" fill="#ffd767"/><path d="M5 13h18v10h-4v-5H9v5H5z" fill="#3f8fd6"/></svg></button>
  <button class="app" aria-label="Store"><svg width="30" height="30" viewBox="0 0 30 30"><path d="M9 8q0-7 6-7t6 7" fill="none" stroke="#aaa" stroke-width="2"/><path d="M0 7h30l-1 22H1z" fill="#fff"/><path d="M8 12h6v6H8z" fill="#f25022"/><path d="M15 12h6v6h-6z" fill="#7fba00"/><path d="M8 19h6v6H8z" fill="#00a4ef"/><path d="M15 19h6v6h-6z" fill="#ffb900"/></svg></button>
  <button class="app running" aria-label="Chrome"><svg width="28" height="28" viewBox="0 0 28 28"><circle cx="14" cy="14" r="14" fill="#fbc116"/><path d="M2 7a14 14 0 0 1 24 0H14L8 17z" fill="#e34133"/><path d="M2 7a14 14 0 0 0 11 21l6-10-10-1z" fill="#2da94f"/><circle cx="14" cy="14" r="6.500" fill="#fff"/><circle cx="14" cy="14" r="5" fill="#4285f4"/></svg></button>
  <button class="app running" aria-label="Messages, 4 unread"><svg width="30" height="30" viewBox="0 0 30 30"><path d="M0 0h30v30H0z" fill="#139be0"/><path d="M5 22C1 12 8 4 20 6M8 21c-3-7 3-12 11-12M12 18c0-4 3-6 7-6" fill="none" stroke="#fff" stroke-width="2"/></svg><span class="badge">4</span></button>
  <button class="app running excel" aria-label="Excel"><svg width="30" height="28" viewBox="0 0 30 28"><path d="M7 0h23v28H7z" fill="#21a366"/><path d="M18 0h12v14H18z" fill="#33c481"/><path d="M7 14h23v14H7z" fill="#107c41"/><path d="M7 14h11v7H7z" fill="#0e6f3a"/><path d="M18 14h12v7H18z" fill="#169150"/><path d="M0 6h16v16H0z" fill="#0b6b38"/><text x="4" y="19" class="xl">x</text></svg></button>
  <div class="tray">
    <svg width="16" height="10" viewBox="0 0 16 10"><path d="M1 9l7-7 7 7" fill="none" stroke="#eee" stroke-width="1.700"/></svg>
    <svg width="20" height="12" viewBox="0 0 20 12"><path d="M1 1h16v10H1z" fill="none" stroke="#fff" stroke-width="1.300"/><path d="M3 3h12v6H3zM18 3.500h2v5h-2z" fill="#fff"/></svg>
    <svg width="17" height="16" viewBox="0 0 17 16" fill="none" stroke="#ddd" stroke-width="1.500"><path d="M1 15C1 7 7 1 16 1M5 15C5 9 9 5 16 5M9 15c0-4 3-6 7-6"/><circle cx="14" cy="13.500" r="1.300" fill="#fff"/></svg>
    <svg width="22" height="18" viewBox="0 0 22 18" fill="none" stroke="#eee" stroke-width="1.400"><path d="M1 6h3l5-4v14l-5-4H1zM12 6q2 3 0 6M15 4q4 5 0 10M18 2q5 7 0 14"/></svg>
  </div>
  <time class="clock">10:52 PM<br>07/13/2020</time>
  <button class="notes" aria-label="Notifications"><svg width="20" height="20" viewBox="0 0 20 20" fill="none" stroke="#fff" stroke-width="1.400"><path d="M1 1h18v15h-6l-3 3-3-3H1z"/></svg></button>
  <button class="peek" aria-label="Show desktop"></button>
</footer>
</body>
</html>
```
FILE: styles.css
```css
* { box-sizing: border-box; }
body {
  margin: 0;
  height: 100vh;
  display: flex;
  flex-direction: column;
  overflow: hidden;
  background: #e6e6e6;
  color: #444;
  font: 14px/20px "Noto Sans", "Open Sans", sans-serif;
  white-space: nowrap;
}
button, input, select { font: inherit; color: inherit; background: none; border: 0; padding: 0; margin: 0; outline: 0; }
a { color: inherit; text-decoration: none; }
svg { display: block; flex: none; overflow: visible; }
.defs { position: absolute; width: 0; height: 0; }
.chev { width: 8px; height: 6px; display: inline-block; }
.tri { display: inline-block; border: 4px solid transparent; width: 0; height: 0; }
.tri.down { border-top-color: currentColor; border-bottom-width: 0; }
.tri.up { border-bottom-color: currentColor; border-top-width: 0; }
.tri.left { border-right-color: currentColor; border-left-width: 0; }
.tri.right { border-left-color: currentColor; border-right-width: 0; }
.grip { width: 3px; height: 15px; background: repeating-linear-gradient(#aaa 0 3px, transparent 3px 6px); }

/* Title bar */
.titlebar {
  flex: none;
  display: grid;
  grid-template-columns: 743fr 458fr 719fr;
  align-items: center;
  height: 43px;
  background: #217346;
  border-bottom: 1px solid #1a5e38;
  color: #fff;
}
.quick { display: flex; align-items: center; padding-left: 28px; }
.autosave { display: flex; align-items: center; gap: 8px; margin-right: 18px; }
.toggle { position: absolute; opacity: 0; }
.toggle-face { display: flex; align-items: center; gap: 8px; width: 47px; height: 20px; border: 1px solid #fff; border-radius: 10px; padding-left: 5px; font-size: 12px; }
.toggle-face::before { content: ""; width: 10px; height: 10px; border-radius: 5px; background: #fff; }
.q { display: flex; }
.undo { margin: 0 7px 0 15px; }
.redo { margin: 0 6px 0 14px; }
.dim { opacity: .25; }
.touch { margin: 0 9px 0 8px; }
.custom { margin-left: 18px; }
.docname { margin-left: auto; margin-right: 110px; }
.docname .tri { margin: 0 0 3px 6px; }
.search { display: flex; align-items: center; gap: 17px; height: 29px; padding-left: 22px; background: #a0ceb3; color: #1d5c38; }
.search input { flex: 1; min-width: 0; }
::placeholder { color: inherit; opacity: 1; }
.account { display: flex; align-items: center; justify-content: flex-end; padding-right: 1px; }
.user { margin: 0 13px; }
.avatar { width: 30px; height: 30px; border-radius: 15px; background: #038387; font-size: 12px; line-height: 30px; text-align: center; margin-right: 14px; }
.win { width: 57px; height: 42px; display: flex; align-items: center; justify-content: center; }

/* Ribbon tabs */
.tabs { flex: none; display: flex; align-items: center; gap: 28px; height: 41px; padding: 0 15px 3px 20px; background: #f3f3f3; font-size: 16px; }
.tabs a { line-height: 28px; padding-top: 4px; border-bottom: 4px solid transparent; }
.tabs .file { margin-right: 7px; }
.tabs .on { font-weight: 700; border-color: #217346; }
.collab { display: flex; gap: 12px; margin-left: auto; }
.collab button { display: flex; align-items: center; gap: 6px; height: 28px; padding: 0 10px; background: #fff; color: #217346; font-weight: 700; font-size: 15px; }

/* Ribbon */
.ribbon { flex: none; display: flex; height: 116px; padding-top: 2px; background: #f3f3f3; }
.group { display: flex; flex-direction: column; height: 111px; border-right: 1px solid #c0c0c0; flex: none; }
.body { display: flex; height: 96px; flex: none; }
.name { position: relative; text-align: center; font-size: 12px; line-height: 18px; }
.name:has(.launch) { padding-right: 22px; }
.launch { position: absolute; right: 3px; top: 3px; }
.small { display: flex; align-items: center; gap: 2px; height: 30px; }
.small > svg:first-child { width: 20px; }
.small .gap { margin-left: 12px; }
.small .near { margin-left: 3px; }
.stack { display: flex; flex-direction: column; }
.big { display: flex; flex-direction: column; align-items: center; padding-top: 2px; width: 100%; }
.big > svg:first-child { margin-bottom: 3px; }
.big > .chev { margin-top: 5px; }
.big.off { color: #b0b0b0; }
.b96 { width: 96px; }
.b66 { width: 66px; }
.b62 { width: 62px; }
.b56 { width: 56px; }
.b52 { width: 52px; }
.rows { flex-direction: column; gap: 11px; padding-top: 10px; }
.row { display: flex; align-items: center; height: 29px; }
.ic { display: flex; align-items: center; justify-content: center; height: 29px; }
.w28 { width: 28px; }
.w24 { width: 24px; }
.w18 { width: 18px; }
.sep { width: 1px; height: 29px; background: #d8d8d8; margin: 0 4px; }
.pressed { background: #c6c6c6; }
.tinytext { font: 10px "Liberation Sans", sans-serif; fill: #333; }
.clipboard { width: 205px; }
.clipboard .big { width: 67px; padding-left: 4px; }
.paste > svg:first-child { margin-left: 4px; }
.font { width: 281px; }
.font .body { padding-left: 10px; }
.fmt { font-size: 17px; }
.ital { font: italic 18px "Liberation Serif", serif; }
.combo { position: relative; height: 29px; border: 1px solid #c0c0c0; background: #fff; }
.combo select { appearance: none; width: 100%; height: 27px; padding-left: 2px; color: #333; }
.combo .chev { position: absolute; right: 4px; top: 11px; }
.family { width: 145px; }
.size { width: 62px; border-left: 0; }
.numfmt { width: 168px; }
.grow, .shrink { width: 28px; align-items: flex-start; }
.glyph { font-size: 20px; line-height: 29px; }
.shrink .glyph { font-size: 17px; }
.grow svg, .shrink svg { margin-top: 5px; }
.fontcolor { width: 20px; height: 22px; border-bottom: 5px solid #f00; font-size: 17px; line-height: 15px; }
.align { width: 343px; }
.align .body { padding-left: 11px; }
.sep.wide { margin-left: 19px; margin-right: 11px; }
.sep.near { margin-left: 6px; }
.align .sep.near { margin-right: 9px; }
.number { width: 189px; }
.number .body { padding-left: 11px; }
.sym { font-size: 20px; }
.styles { width: 238px; }
.styles .body { padding-left: 7px; }
.cells { width: 176px; }
.cells .body { padding-left: 11px; }
.editing { width: 249px; }
.editing .body { padding-left: 16px; }
.editing .stack { width: 110px; gap: 5px; }
.editing .small { height: 25px; }
.ideas { width: 72px; }
.sens { width: 92px; }
.collapse { margin: auto 11px 4px auto; }

/* Formula bar */
.formula { flex: none; display: flex; align-items: center; height: 55px; padding: 0 7px 0 6px; background: linear-gradient(#cdcdcd, #e6e6e6 10px); }
.namebox, .fx, .entry { display: flex; align-items: center; height: 29px; background: #fff; border: 1px solid #d0d0d0; }
.namebox { width: 127px; padding: 0 8px 0 6px; margin-right: 17px; }
.namebox input { flex: 1; min-width: 0; }
.namebox .tri { color: #777; }
.fx { width: 136px; margin: 0 4px 0 17px; }
.fx button { flex: 1; display: flex; justify-content: center; }
.fx .f { font: italic 20px/24px "Liberation Serif", serif; }
.entry { flex: 1; padding-right: 4px; }
.entry input { flex: 1; }

/* Worksheet */
.sheet { flex: 1; min-height: 0; display: flex; }
.grid { flex: 1; min-width: 0; overflow: hidden; background: #fff; border-right: 1px solid #999; border-bottom: 1px solid #999; }
table { table-layout: fixed; width: 100%; border-spacing: 0; color: #000; font-size: 13px; line-height: 18px; }
.c-out { width: 54px; }
.c-num { width: 30px; }
.c-a { width: 415px; }
.c-b, .c-d { width: 79px; }
.c-x { width: 80px; }
td, th { padding: 0; height: 24px; }
thead td, thead th { background: #e6e6e6; border-bottom: 1px solid #999; line-height: 20px; }
thead th { font-size: 16px; font-weight: 400; border-right: 1px solid #b4b4b4; color: #333; }
thead .sel { background: #d2d2d2; color: #217346; border-bottom: 2px solid #217346; }
thead .last { border-right: 0; overflow: hidden; text-align: right; }
thead td { border-bottom: 0; vertical-align: top; }
.levels { font-size: 0; padding-left: 2px; }
.levels button { width: 23px; height: 23px; border: 1px solid #999; font-size: 11px; line-height: 20px; color: #555; vertical-align: top; }
.levels button + button { border-left: 0; }
.corner span { display: block; margin: 5px 2px 0 auto; width: 0; border-left: 16px solid transparent; border-bottom: 16px solid #b4b4b4; }
thead .corner { border-right: 1px solid #b4b4b4; }
tbody th { background: #e6e6e6; border-right: 1px solid #999; border-bottom: 1px solid #b4b4b4; font-size: 16px; font-weight: 400; color: #333; }
tbody td { text-align: right; padding-top: 2px; padding-right: 7px; }
tbody th + td { text-align: left; padding-left: 3px; padding-right: 0; }
tbody .page { border-right: 1px dashed #999; }
.frozen td, .frozen th { height: 30px; border-bottom: 1px solid #999; }
.frozen th { vertical-align: bottom; line-height: 22px; }
.frozen td { background: #4470c4; color: #fff; font-size: 16px; font-weight: 700; padding-top: 0; padding-right: 4px; vertical-align: top; line-height: 24px; }
.frozen .title { font-size: 19px; vertical-align: bottom; line-height: 27px; }
.frozen .here { border-bottom-color: #217346; }
.frozen .page, .frozen .blank { background: #fff; }
.section td { height: 26px; }
.section th + td { background: #4470c4; color: #fff; font-size: 17px; font-weight: 700; line-height: 24px; }
.rule td:not(.out):not(.page):not(.blank) { border-bottom: 1px solid #000; }
.years td { font-weight: 700; font-size: 12px; padding-right: 3px; }
.input td { color: #548235; }
.input th + td { color: #000; }
.total td { font-weight: 600; }
.pct td { font-style: italic; padding-right: 5px; }
.pct th + td { padding-left: 15px; }
.dash td { padding-right: 22px; font-weight: 400; }
.dash th + td { font-weight: 600; }
/* Outline gutter with the group bracket */
tbody tr .out { background: #e6e6e6 linear-gradient(#999, #999) 10px 0 / 2px 100% no-repeat; padding: 0 18px 0 0; text-align: right; color: #888; font: 400 13px/18px "Noto Sans", sans-serif; }
tbody tr .out.first { background-image: linear-gradient(#999, #999), linear-gradient(#999, #999); background-position: 10px 0, 10px 0; background-size: 2px 100%, 6px 2px; }
.frozen .out.out, .section .out.out { background-image: none; }
tbody tr .out.end { padding: 0 0 0 2px; text-align: left; background-image: none; vertical-align: top; }
.end button { width: 23px; height: 23px; border: 1px solid #999; display: block; color: #333; }
.vscroll { width: 24px; padding: 2px 3px 0 2px; display: flex; flex-direction: column; color: #555; }
.vscroll button, .hscroll button { width: 19px; height: 19px; background: #fff; border: 1px solid #b0b0b0; display: flex; align-items: center; justify-content: center; flex: none; }
.track { flex: 1; background: #dadada; }
.thumb { background: #fff; border: 1px solid #b0b0b0; }
.vscroll .track { padding-top: 223px; }
.vscroll .thumb { height: 76px; }

/* Sheet tabs */
.sheettabs { flex: none; display: flex; align-items: flex-start; height: 29px; padding-right: 27px; font-size: 16px; line-height: 22px; }
.nav { display: flex; gap: 24px; width: 104px; height: 24px; align-items: center; padding: 6px 0 0 28px; color: #b4b4b4; border-right: 1px solid #999; }
.tab { padding: 0 17px 0 14px; height: 24px; }
.tab.active { height: 25px; background: #fff; color: #217346; font-weight: 700; border: 1px solid #999; border-width: 0 1px 2px; border-bottom-color: #217346; padding: 0 12px; }
.add { margin: 5px auto 0 32px; }
.sheettabs .grip { margin: 7px 15px 0 0; }
.hscroll { display: flex; width: 726px; padding-top: 5px; color: #555; }
.hscroll .thumb { width: 94%; height: 19px; }

/* Status bar */
.status { flex: none; display: flex; align-items: center; height: 27px; padding: 0 10px; background: #f3f3f3; border-top: 1px solid #ccc; font-size: 12px; color: #666; }
.status > button { margin-left: 26px; }
.views { display: flex; margin-left: auto; }
.views button { width: 50px; height: 26px; display: flex; align-items: center; justify-content: center; }
.status .zoomout { margin-left: 7px; }
.status .zoomin { margin-left: 5px; }
.slider { appearance: none; width: 126px; height: 16px; margin-left: 5px; background: linear-gradient(#aaa, #aaa) center / 100% 1px no-repeat; }
.slider::-webkit-slider-thumb { appearance: none; width: 6px; height: 15px; background: #666; }
.zoompct { margin-left: 18px; }

/* Taskbar */
.taskbar { flex: none; display: flex; align-items: center; height: 50px; background: linear-gradient(90deg, #22313a, #2a3238 30%, #252d36 70%, #1c2a31); color: #fff; }
.start { width: 60px; display: flex; justify-content: center; }
.find { display: flex; align-items: center; gap: 13px; width: 430px; height: 50px; padding-left: 15px; background: #f3f3f3; color: #333; font-size: 17px; }
.find input { flex: 1; min-width: 0; }
.app { position: relative; width: 62px; height: 50px; display: flex; align-items: center; justify-content: center; }
.app.running { border-bottom: 3px solid #76b9ed; padding-top: 3px; width: 51px; margin: 0 6px 0 5px; }
.app.excel { background: #4e585e; width: 61px; margin: 0; }
.badge { position: absolute; right: 7px; top: 22px; width: 20px; height: 20px; border-radius: 10px; background: #e63b5a; font-size: 14px; line-height: 20px; font-weight: 700; }
.xl { font-size: 14px; font-weight: 700; fill: #fff; }
.tray { display: flex; align-items: center; gap: 22px; margin-left: auto; }
.clock { width: 112px; text-align: center; line-height: 23px; }
.notes { padding: 0 26px 0 5px; }
.peek { width: 5px; height: 50px; border-left: 1px solid #6b7479; }
```
